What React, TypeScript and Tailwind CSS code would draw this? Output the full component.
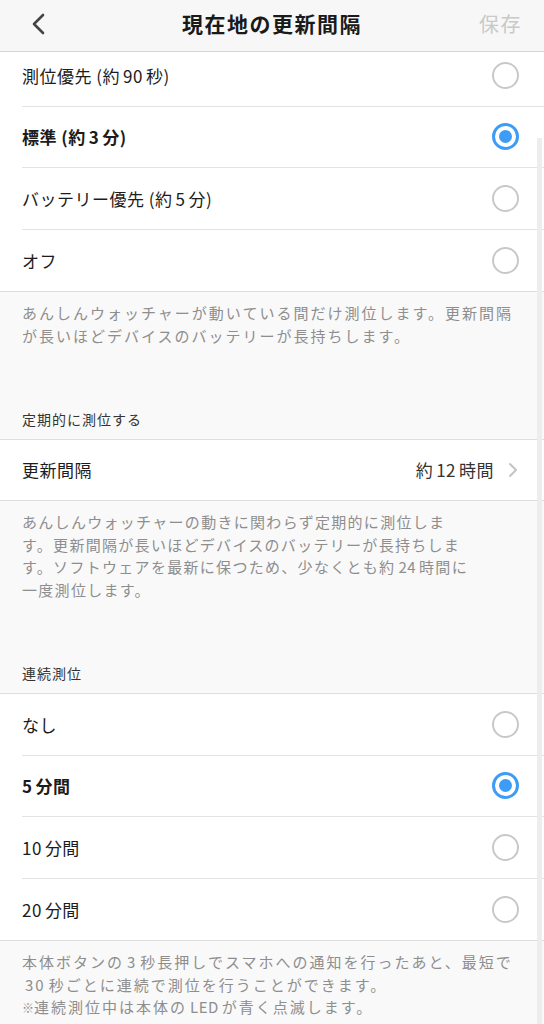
import { ReactNode } from 'react';

const font = { fontFamily: '"Noto Sans CJK JP", "Noto Sans", sans-serif' };

// iOS puts a little space around latin digits inside Japanese text
const Spaced = ({ text }: { text: string }) => (
  <>
    {text.split(/(\d+)/).map((part, i) =>
      /^\d+$/.test(part) ? (
        <span key={i} className={`${i === 1 && text.split(/(\d+)/)[0] === '' ? 'mr-[3px]' : 'mx-[3px]'} tracking-[0.5px]`}>
          {part}
        </span>
      ) : (
        <span key={i}>{part}</span>
      )
    )}
  </>
);

const Radio = ({ checked }: { checked?: boolean }) =>
  checked ? (
    <div className="w-[27px] h-[27px] rounded-full border-[3px] border-[#3d9df6] flex items-center justify-center">
      <div className="w-[13px] h-[13px] rounded-full bg-[#3d9df6]" />
    </div>
  ) : (
    <div className="w-[27px] h-[27px] rounded-full border-[2px] border-[#c8c8c8]" />
  );

const OptionRow = ({ label, checked, last }: { label: string; checked?: boolean; last?: boolean }) => (
  <div className="pl-[22px] bg-white">
    <div
      className={`h-[61.5px] flex items-center justify-between pr-[25px] ${
        last ? '' : 'border-b border-[#e3e3e3]'
      }`}
    >
      <span className={`text-[17px] tracking-[0.5px] text-[#1c1c1c] ${checked ? 'font-bold' : ''}`}>
        <Spaced text={label} />
      </span>
      <Radio checked={checked} />
    </div>
  </div>
);

const Note = ({ children, className = '' }: { children: ReactNode; className?: string }) => (
  <p className={`px-[22px] text-[15px] leading-[22.5px] text-[#8e8e8e] ${className}`}>{children}</p>
);

const SectionTitle = ({ children }: { children: ReactNode }) => (
  <div className="px-[22px] pb-[10px] text-[14px] leading-[20px] tracking-[1px] text-[#333]">{children}</div>
);

export default function App() {
  return (
    <div className="relative w-[544px] h-[1024px] overflow-hidden bg-[#f9f9f9]" style={font}>
      <header className="relative z-10 h-[52px] bg-[#f7f7f7] border-b border-[#d6d6d6] flex items-center justify-between px-[28px]">
        <svg width="20" height="24" viewBox="0 0 20 24" className="-mt-[3px]">
          <path d="M15 3 L6 12 L15 21" fill="none" stroke="#444" strokeWidth="2.6" strokeLinecap="round" strokeLinejoin="round" />
        </svg>
        <h1 className="absolute left-0 right-0 text-center text-[21px] font-bold tracking-[1.5px] text-[#1a1a1a] -mt-[3px] pointer-events-none">
          現在地の更新間隔
        </h1>
        <span className="text-[20px] text-[#c9c9c9] tracking-[1.5px] -mt-[3px] -mr-[6px]">保存</span>
      </header>

      <div className="-mt-[7px]">
        <div className="border-b border-[#dedede]">
          <OptionRow label="測位優先 (約90秒)" />
          <OptionRow label="標準 (約3分)" checked />
          <OptionRow label="バッテリー優先 (約5分)" />
          <OptionRow label="オフ" last />
        </div>

        <div className="h-[147px] flex flex-col justify-between pt-[10px]">
          <Note className="tracking-[2px]">
            あんしんウォッチャーが動いている間だけ測位します。更新間隔
            <br />
            が長いほどデバイスのバッテリーが長持ちします。
          </Note>
          <SectionTitle>定期的に測位する</SectionTitle>
        </div>

        <div className="bg-white border-y border-[#dedede] h-[62px] flex items-center justify-between pl-[22px] pr-[26px]">
          <span className="text-[17px] tracking-[0.5px] text-[#1c1c1c]">更新間隔</span>
          <div className="flex items-center gap-[14px]">
            <span className="text-[17px] tracking-[0.5px] text-[#333]">
              <Spaced text="約12時間" />
            </span>
            <svg width="10" height="16" viewBox="0 0 10 16">
              <path d="M2 2 L8 8 L2 14" fill="none" stroke="#c4c4c4" strokeWidth="2" strokeLinecap="round" strokeLinejoin="round" />
            </svg>
          </div>
        </div>

        <div className="h-[192px] flex flex-col justify-between pt-[10px]">
          <Note className="tracking-[1.3px]">
            あんしんウォッチャーの動きに関わらず定期的に測位しま
            <br />
            す。更新間隔が長いほどデバイスのバッテリーが長持ちしま
            <br />
            す。ソフトウェアを最新に保つため、少なくとも約<span className="mx-[3px] tracking-[0.5px]">24</span>時間に
            <br />
            一度測位します。
          </Note>
          <SectionTitle>連続測位</SectionTitle>
        </div>

        <div className="border-y border-[#dedede]">
          <OptionRow label="なし" />
          <OptionRow label="5分間" checked />
          <OptionRow label="10分間" />
          <OptionRow label="20分間" last />
        </div>

        <Note className="pt-[10px] tracking-[2px]">
          本体ボタンの<span className="mx-[3px]">3</span>秒長押しでスマホへの通知を行ったあと、最短で
          <br />
          <span className="mx-[3px]">30</span>秒ごとに連続で測位を行うことができます。
          <br />
          <span className="text-[12px] tracking-[0px]">※</span>連続測位中は本体の<span className="mx-[3px] tracking-[0.5px]">LED</span>が青く点滅します。
        </Note>
      </div>

      <div className="absolute right-[2px] top-[138px] bottom-0 w-[5px] bg-[#ededed]" />
    </div>
  );
}
